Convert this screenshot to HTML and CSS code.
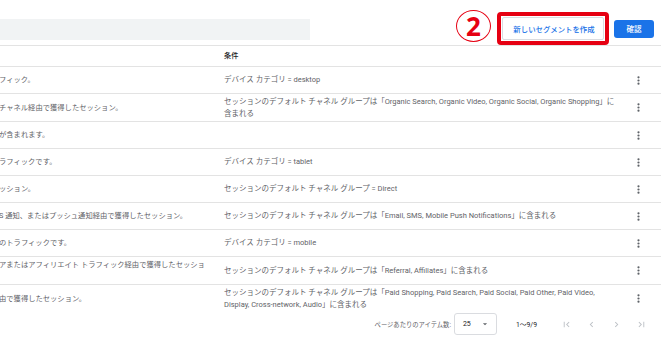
FILE: index.html
```html
<!DOCTYPE html>
<html lang="ja">
<head>
    <meta charset="UTF-8">
    <meta name="viewport" content="width=device-width, initial-scale=1.0">
    <title>セグメント</title>
    <link rel="stylesheet" href="styles.css">
</head>
<body>
    <div class="toolbar">
        <div class="search"></div>
        <span class="step">2</span>
        <div class="callout">
            <button class="btn-outline">新しいセグメントを作成</button>
        </div>
        <button class="btn-primary">確認</button>
    </div>

    <div class="table">
        <div class="row head">
            <div></div>
            <div>条件</div>
            <div></div>
        </div>
        <div class="row">
            <div class="desc">フィック。</div>
            <div class="cond">デバイス カテゴリ = desktop</div>
            <div class="more"><svg width="3" height="9" viewBox="0 0 3 9"><circle cx="1.5" cy="1.3" r="1.1"/><circle cx="1.5" cy="4.5" r="1.1"/><circle cx="1.5" cy="7.7" r="1.1"/></svg></div>
        </div>
        <div class="row">
            <div class="desc">チャネル経由で獲得したセッション。</div>
            <div class="cond">セッションのデフォルト チャネル グループは「Organic Search, Organic Video, Organic Social, Organic Shopping」に含まれる</div>
            <div class="more"><svg width="3" height="9" viewBox="0 0 3 9"><circle cx="1.5" cy="1.3" r="1.1"/><circle cx="1.5" cy="4.5" r="1.1"/><circle cx="1.5" cy="7.7" r="1.1"/></svg></div>
        </div>
        <div class="row">
            <div class="desc">が含まれます。</div>
            <div class="cond"></div>
            <div class="more"><svg width="3" height="9" viewBox="0 0 3 9"><circle cx="1.5" cy="1.3" r="1.1"/><circle cx="1.5" cy="4.5" r="1.1"/><circle cx="1.5" cy="7.7" r="1.1"/></svg></div>
        </div>
        <div class="row">
            <div class="desc">ラフィックです。</div>
            <div class="cond">デバイス カテゴリ = tablet</div>
            <div class="more"><svg width="3" height="9" viewBox="0 0 3 9"><circle cx="1.5" cy="1.3" r="1.1"/><circle cx="1.5" cy="4.5" r="1.1"/><circle cx="1.5" cy="7.7" r="1.1"/></svg></div>
        </div>
        <div class="row">
            <div class="desc">ッション。</div>
            <div class="cond">セッションのデフォルト チャネル グループ = Direct</div>
            <div class="more"><svg width="3" height="9" viewBox="0 0 3 9"><circle cx="1.5" cy="1.3" r="1.1"/><circle cx="1.5" cy="4.5" r="1.1"/><circle cx="1.5" cy="7.7" r="1.1"/></svg></div>
        </div>
        <div class="row">
            <div class="desc">S 通知、またはプッシュ通知経由で獲得したセッション。</div>
            <div class="cond">セッションのデフォルト チャネル グループは「Email, SMS, Mobile Push Notifications」に含まれる</div>
            <div class="more"><svg width="3" height="9" viewBox="0 0 3 9"><circle cx="1.5" cy="1.3" r="1.1"/><circle cx="1.5" cy="4.5" r="1.1"/><circle cx="1.5" cy="7.7" r="1.1"/></svg></div>
        </div>
        <div class="row">
            <div class="desc">のトラフィックです。</div>
            <div class="cond">デバイス カテゴリ = mobile</div>
            <div class="more"><svg width="3" height="9" viewBox="0 0 3 9"><circle cx="1.5" cy="1.3" r="1.1"/><circle cx="1.5" cy="4.5" r="1.1"/><circle cx="1.5" cy="7.7" r="1.1"/></svg></div>
        </div>
        <div class="row">
            <div class="desc">アまたはアフィリエイト トラフィック経由で獲得したセッショ<br>&nbsp;</div>
            <div class="cond">セッションのデフォルト チャネル グループは「Referral, Affiliates」に含まれる</div>
            <div class="more"><svg width="3" height="9" viewBox="0 0 3 9"><circle cx="1.5" cy="1.3" r="1.1"/><circle cx="1.5" cy="4.5" r="1.1"/><circle cx="1.5" cy="7.7" r="1.1"/></svg></div>
        </div>
        <div class="row">
            <div class="desc">由で獲得したセッション。</div>
            <div class="cond">セッションのデフォルト チャネル グループは「Paid Shopping, Paid Search, Paid Social, Paid Other, Paid Video, Display, Cross-network, Audio」に含まれる</div>
            <div class="more"><svg width="3" height="9" viewBox="0 0 3 9"><circle cx="1.5" cy="1.3" r="1.1"/><circle cx="1.5" cy="4.5" r="1.1"/><circle cx="1.5" cy="7.7" r="1.1"/></svg></div>
        </div>
    </div>

    <div class="pager">
        <span class="pager-label">ページあたりのアイテム数:</span>
        <div class="select">
            <span>25</span>
            <svg width="10" height="10" viewBox="0 0 24 24"><path d="M7 10l5 5 5-5z"/></svg>
        </div>
        <span class="range">1～9/9</span>
        <span class="nav"><svg width="11" height="11" viewBox="0 0 24 24"><path d="M18.41 16.59L13.82 12l4.59-4.59L17 6l-6 6 6 6zM6 6h2v12H6z"/></svg></span>
        <span class="nav"><svg width="11" height="11" viewBox="0 0 24 24"><path d="M15.41 7.41L14 6l-6 6 6 6 1.41-1.41L10.83 12z"/></svg></span>
        <span class="nav"><svg width="11" height="11" viewBox="0 0 24 24"><path d="M10 6L8.59 7.41 13.17 12l-4.58 4.59L10 18l6-6z"/></svg></span>
        <span class="nav"><svg width="11" height="11" viewBox="0 0 24 24"><path d="M5.59 7.41L10.18 12l-4.59 4.59L7 18l6-6-6-6zM16 6h2v12h-2z"/></svg></span>
    </div>
</body>
</html>
```

FILE: styles.css
```css
:root {
    --line: #e3e3e3;
    --text: #5f6368;
    --blue: #1a73e8;
    --red: #e60012;
}

body {
    margin: 0;
    font-family: Roboto, "Noto Sans CJK JP", sans-serif;
    color: var(--text);
    background: #fff;
}

/* top bar */
.toolbar {
    display: flex;
    align-items: center;
    height: 33px;
    padding: 12px 7px 0 0;
    border-bottom: 1px solid var(--line);
}

.search {
    width: 310px;
    height: 21px;
    margin-top: 2px;
    background: #f1f3f4;
}

.step {
    align-self: flex-start;
    display: flex;
    align-items: center;
    justify-content: center;
    box-sizing: border-box;
    width: 35px;
    height: 32px;
    margin: -2px 6px 0 auto;
    border: 1.5px solid var(--red);
    border-radius: 50%;
    color: var(--red);
    font-family: "Noto Sans", sans-serif;
    font-size: 26px;
    font-weight: bold;
    line-height: 1;
}

.callout {
    padding: 1px;
    border: 4px solid var(--red);
    border-radius: 4px;
}

.btn-outline {
    display: block;
    width: 102px;
    height: 23px;
    padding: 0 0 0 2px;
    background: #fff;
    border: 1px solid #dadce0;
    border-radius: 2px;
    color: var(--blue);
    font-family: inherit;
    font-size: 7.4px;
    font-weight: 500;
}

.btn-primary {
    width: 40px;
    height: 18px;
    margin-left: 5px;
    padding: 0;
    background: var(--blue);
    border: none;
    border-radius: 3px;
    color: #fff;
    font-family: inherit;
    font-size: 7.5px;
    font-weight: 500;
}

/* table */
.row {
    display: grid;
    grid-template-columns: 224px 392px 1fr;
    align-items: center;
    min-height: 22px;
    padding: 2px 0;
    border-bottom: 1px solid var(--line);
    font-size: 7.5px;
    line-height: 11.5px;
}

.row:last-child {
    border-bottom: none;
}

.row.head {
    min-height: 20px;
    padding: 0;
    color: #202124;
    font-weight: 500;
    font-size: 7.2px;
}

.desc {
    white-space: nowrap;
    overflow: hidden;
    text-indent: -1px;
    font-size: 7.3px;
}

.more {
    display: flex;
    padding-left: 21px;
}

.more svg {
    fill: #5f6368;
}

/* pagination */
.pager {
    display: flex;
    justify-content: flex-end;
    align-items: center;
    padding: 1px 7px 0 0;
    font-size: 6.3px;
}

.pager-label {
    margin-right: 3px;
}

.select {
    display: flex;
    align-items: center;
    justify-content: space-between;
    box-sizing: border-box;
    width: 43px;
    height: 22px;
    padding: 0 6px 0 8px;
    border: 1px solid #dadce0;
    border-radius: 3px;
    color: #202124;
    font-size: 7px;
}

.select svg {
    fill: #5f6368;
}

.range {
    margin: 0 17px 0 19px;
    color: #202124;
    font-size: 6.8px;
}

.nav {
    display: flex;
    justify-content: center;
    width: 25px;
}

.nav svg {
    fill: #bdc1c6;
}
```
